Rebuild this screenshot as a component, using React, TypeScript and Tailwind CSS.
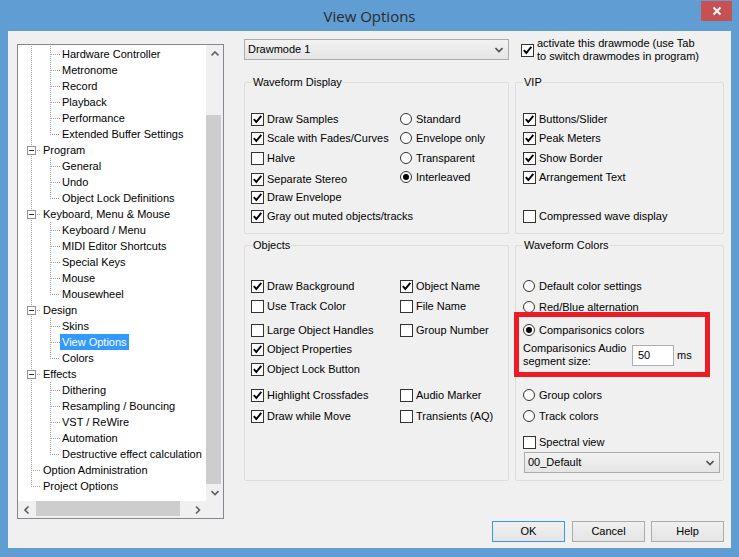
import React from 'react'

type Kind = 'c' | 'cl' | 'p' | 'l' | 'll'

const tree: [string, Kind][] = [
  ['Hardware Controller', 'c'],
  ['Metronome', 'c'],
  ['Record', 'c'],
  ['Playback', 'c'],
  ['Performance', 'c'],
  ['Extended Buffer Settings', 'cl'],
  ['Program', 'p'],
  ['General', 'c'],
  ['Undo', 'c'],
  ['Object Lock Definitions', 'cl'],
  ['Keyboard, Menu & Mouse', 'p'],
  ['Keyboard / Menu', 'c'],
  ['MIDI Editor Shortcuts', 'c'],
  ['Special Keys', 'c'],
  ['Mouse', 'c'],
  ['Mousewheel', 'cl'],
  ['Design', 'p'],
  ['Skins', 'c'],
  ['View Options', 'c'],
  ['Colors', 'cl'],
  ['Effects', 'p'],
  ['Dithering', 'c'],
  ['Resampling / Bouncing', 'c'],
  ['VST / ReWire', 'c'],
  ['Automation', 'c'],
  ['Destructive effect calculation', 'cl'],
  ['Option Administration', 'l'],
  ['Project Options', 'll'],
]

// dotted connector pixels, one every other pixel
function vdots(x: number, y0: number, y1: number) {
  const out: React.ReactNode[] = []
  for (let y = y0; y <= y1; y += 2) out.push(<rect key={`v${x}-${y}`} x={x} y={y} width={1} height={1} />)
  return out
}

function hdots(y: number, x0: number, x1: number) {
  const out: React.ReactNode[] = []
  for (let x = x0; x <= x1; x += 2) out.push(<rect key={`h${y}-${x}`} x={x} y={y} width={1} height={1} />)
  return out
}

function Connector({ kind }: { kind: Kind }) {
  const child = kind === 'c' || kind === 'cl'
  const w = child ? 42 : 23
  return (
    <svg width={w} height={16} className="shrink-0" fill="#a0a0a0">
      {kind === 'c' && [...vdots(13, 0, 15), ...vdots(32, 0, 15), ...hdots(8, 33, 41)]}
      {kind === 'cl' && [...vdots(13, 0, 15), ...vdots(32, 0, 8), ...hdots(8, 34, 41)]}
      {kind === 'l' && [...vdots(13, 0, 15), ...hdots(8, 15, 22)]}
      {kind === 'll' && [...vdots(13, 0, 8), ...hdots(8, 15, 22)]}
      {kind === 'p' && (
        <>
          {vdots(13, 0, 3)}
          {vdots(13, 14, 15)}
          {hdots(8, 19, 22)}
          <rect x={9.5} y={4.5} width={8} height={8} fill="#fff" stroke="#919191" />
          <rect x={11} y={8} width={5} height={1} fill="#333" />
        </>
      )}
    </svg>
  )
}

function TreeRow({ label, kind }: { label: string; kind: Kind }) {
  const selected = label === 'View Options'
  return (
    <div className="flex h-[16px] items-center">
      <Connector kind={kind} />
      <span className={`whitespace-nowrap px-[2px] leading-[16px] ${selected ? 'bg-[#3399ff] text-white' : 'text-black'}`}>{label}</span>
    </div>
  )
}

function Arrow({ d }: { d: 'up' | 'down' | 'left' | 'right' }) {
  if (d === 'up' || d === 'down') {
    const pts = d === 'up' ? '0.5,4.5 4,1 7.5,4.5' : '0.5,1 4,4.5 7.5,1'
    return (
      <svg width="8" height="6">
        <polyline points={pts} fill="none" stroke="#606060" strokeWidth="1.6" />
      </svg>
    )
  }
  const pts = d === 'left' ? '4.5,0.5 1,4 4.5,7.5' : '1,0.5 4.5,4 1,7.5'
  return (
    <svg width="6" height="8">
      <polyline points={pts} fill="none" stroke="#606060" strokeWidth="1.6" />
    </svg>
  )
}

function Tree() {
  return (
    <div className="ml-[9px] mt-[13px] flex h-[475px] w-[207px] shrink-0 flex-col border border-[#828790] bg-white">
      <div className="flex h-[456px]">
        <div className="flex-1 overflow-hidden pt-[1px]">
          {tree.map(([label, kind]) => (
            <TreeRow key={label} label={label} kind={kind} />
          ))}
        </div>
        <div className="flex w-[17px] flex-col bg-[#f0f0f0]">
          <div className="flex h-[17px] items-center justify-center">
            <Arrow d="up" />
          </div>
          <div className="h-[53px]" />
          <div className="h-[369px] w-[15px] bg-[#cdcdcd]" />
          <div className="flex h-[17px] items-center justify-center">
            <Arrow d="down" />
          </div>
        </div>
      </div>
      <div className="flex h-[17px] bg-[#f0f0f0]">
        <div className="flex flex-1">
          <div className="flex w-[17px] items-center justify-center">
            <Arrow d="left" />
          </div>
          <div className="ml-[1px] h-[15px] w-[144px] bg-[#cdcdcd]" />
          <div className="flex-1" />
          <div className="flex w-[17px] items-center justify-center">
            <Arrow d="right" />
          </div>
        </div>
        <div className="w-[17px]" />
      </div>
    </div>
  )
}

function Check({ on }: { on?: boolean }) {
  return (
    <span className="flex h-[13px] w-[13px] shrink-0 items-center justify-center border border-[#333] bg-white">
      {on && (
        <svg width="11" height="11" viewBox="0 0 11 11">
          <path d="M1.8 5.2 L4.3 8 L9.3 1.8" fill="none" stroke="#000" strokeWidth="1.9" />
        </svg>
      )}
    </span>
  )
}

function Radio({ on }: { on?: boolean }) {
  return (
    <span className="flex h-[12px] w-[12px] shrink-0 items-center justify-center rounded-full border border-[#333] bg-white">
      {on && <span className="h-[6px] w-[6px] rounded-full bg-black" />}
    </span>
  )
}

function Item({ label, on, radio, className = '' }: { label?: string; on?: boolean; radio?: boolean; className?: string }) {
  if (!label) return <div className={`h-[20px] ${className}`} />
  return (
    <div className={`flex h-[20px] items-center ${radio ? 'gap-[4px]' : 'gap-[3px]'} ${className}`}>
      {radio ? <Radio on={on} /> : <Check on={on} />}
      <span className="whitespace-nowrap leading-[13px]">{label}</span>
    </div>
  )
}

function Group({ title, className = '', children }: { title: string; className?: string; children?: React.ReactNode }) {
  return (
    <div className={`relative rounded-[2px] border border-[#dcdcdc] ${className}`}>
      <div className="-mt-[7px] ml-[7px] w-fit bg-[#f0f0f0] px-[1px] leading-[13px]">{title}</div>
      {children}
    </div>
  )
}

function Combo({ value, className = '' }: { value: string; className?: string }) {
  return (
    <div className={`flex h-[21px] items-center justify-between border border-[#acacac] bg-linear-to-b from-[#f2f2f2] to-[#e5e5e5] pl-[3px] pr-[5px] ${className}`}>
      <span className="leading-[13px]">{value}</span>
      <svg width="8" height="6">
        <polyline points="0.5,1 4,4.5 7.5,1" fill="none" stroke="#505050" strokeWidth="1.6" />
      </svg>
    </div>
  )
}

function Button({ label, primary, className = '' }: { label: string; primary?: boolean; className?: string }) {
  return (
    <div
      className={`flex h-[21px] w-[73px] items-center justify-center border bg-linear-to-b from-[#f0f0f0] to-[#e5e5e5] ${
        primary ? 'border-[#3d95e6]' : 'border-[#acacac]'
      } ${className}`}
    >
      {label}
    </div>
  )
}

export default function App() {
  return (
    <div className="flex h-[557px] w-[739px] flex-col bg-[#5f9dd2] font-['Liberation_Sans',Arial,sans-serif] text-[11px] text-black">
      {/* title bar */}
      <div className="grid h-[31px] grid-cols-[1fr_auto_1fr]">
        <div />
        <div className="pt-[6px] font-['Open_Sans',sans-serif] text-[15px] leading-[20px] text-[#2b2b2b]">View Options</div>
        <div className="flex justify-end">
          <div className="mr-[7px] mt-[1px] flex h-[20px] w-[31px] items-center justify-center bg-[#c75050]">
            <svg width="10" height="10">
              <path d="M1.5 1.5 L8.5 8.5 M8.5 1.5 L1.5 8.5" stroke="#fff" strokeWidth="2" />
            </svg>
          </div>
        </div>
      </div>

      {/* client area */}
      <div className="mx-[8px] flex h-[517px] items-start bg-[#f0f0f0]">
        <Tree />

        <div className="ml-[20px] mt-[8px] w-[480px]">
          <div className="flex h-[21px] items-start">
            <Combo value="Drawmode 1" className="w-[265px]" />
            <div className="-mt-[2px] ml-[12px] flex items-center gap-[3px]">
              <Check on />
              <div className="leading-[13px]">
                activate this drawmode (use Tab
                <br />
                to switch drawmodes in program)
              </div>
            </div>
          </div>

          <div className="mt-[22px] flex gap-[6px]">
            <Group title="Waveform Display" className="h-[152px] w-[265px]">
              <div className="mt-[20px] flex pl-[6px]">
                <div className="w-[149px]">
                  <Item label="Draw Samples" on />
                  <Item label="Scale with Fades/Curves" on className="-mt-[1px]" />
                  <Item label="Halve" />
                  <Item label="Separate Stereo" on className="mt-[1px]" />
                  <Item label="Draw Envelope" on className="-mt-[2px]" />
                  <Item label="Gray out muted objects/tracks" on className="-mt-[1px]" />
                </div>
                <div>
                  <Item label="Standard" radio />
                  <Item label="Envelope only" radio className="-mt-[1px]" />
                  <Item label="Transparent" radio />
                  <Item label="Interleaved" radio on className="-mt-[1px]" />
                </div>
              </div>
            </Group>
            <Group title="VIP" className="h-[152px] w-[209px]">
              <div className="mt-[20px] pl-[7px]">
                <Item label="Buttons/Slider" on />
                <Item label="Peak Meters" on className="-mt-[1px]" />
                <Item label="Show Border" on />
                <Item label="Arrangement Text" on className="-mt-[1px]" />
                <Item label="Compressed wave display" className="mt-[19px]" />
              </div>
            </Group>
          </div>

          <div className="mt-[11px] flex gap-[6px]">
            <Group title="Objects" className="h-[236px] w-[265px]">
              <div className="mt-[24px] pl-[6px]">
                <div className="flex">
                  <Item label="Draw Background" on className="w-[149px]" />
                  <Item label="Object Name" on />
                </div>
                <div className="flex">
                  <Item label="Use Track Color" className="w-[149px]" />
                  <Item label="File Name" />
                </div>
                <div className="mt-[4px] flex">
                  <Item label="Large Object Handles" className="w-[149px]" />
                  <Item label="Group Number" />
                </div>
                <Item label="Object Properties" on className="-mt-[1px]" />
                <Item label="Object Lock Button" on />
                <div className="mt-[6px] flex">
                  <Item label="Highlight Crossfades" on className="w-[149px]" />
                  <Item label="Audio Marker" />
                </div>
                <div className="mt-[1px] flex">
                  <Item label="Draw while Move" on className="w-[149px]" />
                  <Item label="Transients (AQ)" />
                </div>
              </div>
            </Group>
            <Group title="Waveform Colors" className="h-[236px] w-[209px]">
              <div className="mt-[24px] pl-[7px]">
                <Item label="Default color settings" radio />
                <Item label="Red/Blue alternation" radio className="mt-[1px]" />
                <Item label="Comparisonics colors" radio on className="mt-[3px]" />
                <div className="mt-[2px] flex h-[26px] items-center">
                  <div className="w-[109px] leading-[13px]">
                    Comparisonics Audio
                    <br />
                    segment size:
                  </div>
                  <div className="flex h-[21px] w-[42px] items-center border border-[#abadb3] bg-white pl-[5px]">50</div>
                  <span className="ml-[3px]">ms</span>
                </div>
                <Item label="Group colors" radio className="mt-[17px]" />
                <Item label="Track colors" radio className="mt-[1px]" />
                <Item label="Spectral view" className="mt-[6px]" />
                <Combo value="00_Default" className="ml-[1px] w-[196px]" />
              </div>
              {/* red annotation frame */}
              <div className="absolute left-[-2px] top-[66px] h-[65px] w-[196px] border-[5px] border-[#ed1c24]" />
            </Group>
          </div>

          <div className="mt-[40px] flex justify-end">
            <Button label="OK" primary className="mr-[7px]" />
            <Button label="Cancel" className="mr-[6px]" />
            <Button label="Help" />
          </div>
        </div>
      </div>
    </div>
  )
}
